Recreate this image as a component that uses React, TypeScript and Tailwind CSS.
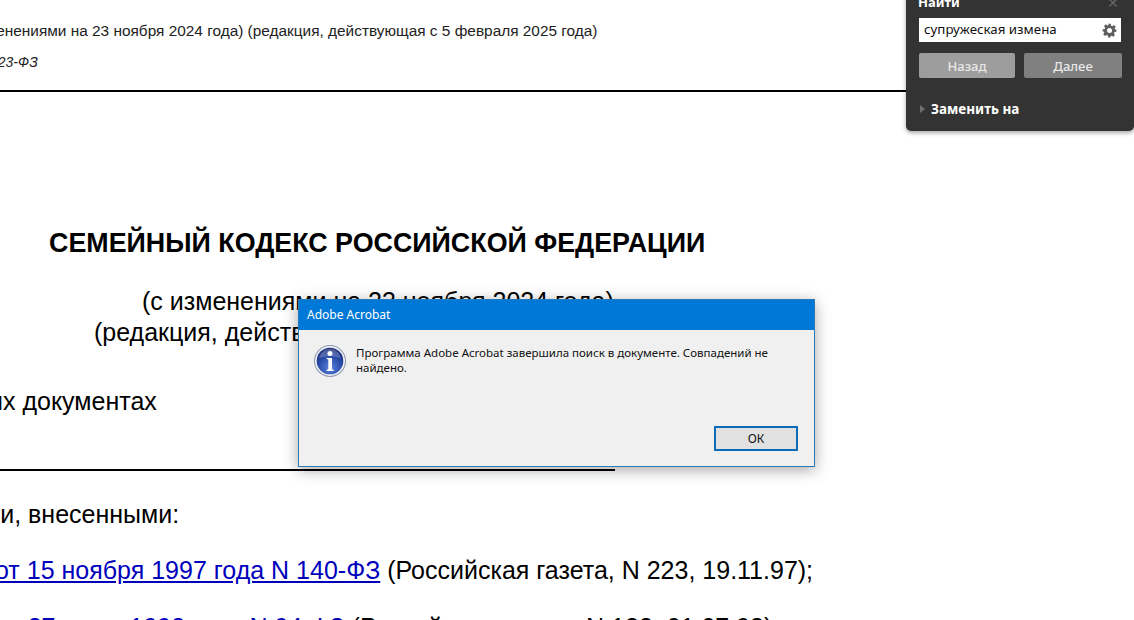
import React from "react";

function InfoIcon() {
  return (
    <svg width="34" height="34" viewBox="0 0 34 34" className="shrink-0">
      <defs>
        <radialGradient id="infoFill" cx="50%" cy="75%" r="75%">
          <stop offset="0%" stopColor="#5f86e0" />
          <stop offset="55%" stopColor="#2a4cab" />
          <stop offset="100%" stopColor="#17286f" />
        </radialGradient>
      </defs>
      <circle cx="17" cy="17" r="16" fill="#8d97ac" />
      <circle cx="17" cy="17" r="15" fill="#eef0f5" />
      <circle cx="17" cy="17" r="13.3" fill="url(#infoFill)" />
      <path d="M6 14.5C7.5 8 12 4.8 17 4.8S26.5 8 28 14.5C22 11.5 12 11.5 6 14.5Z" fill="#ffffff" opacity="0.22" />
      <circle cx="17" cy="9.6" r="2.5" fill="#ffffff" />
      <path d="M13.6 14h5.4v11.2l1.6.6V27h-7v-1.2l1.7-.6v-9.6l-1.7-.6Z" fill="#ffffff" />
    </svg>
  );
}

function FindPanel() {
  return (
    <div className="absolute left-[906px] top-[-12px] h-[143px] w-[228px] rounded-b-[5px] bg-[#333333] font-['Noto_Sans',sans-serif] shadow-[0_2px_4px_rgba(0,0,0,0.35)]">
      <div className="flex h-[25px] items-center justify-between pl-[12px] pr-[15px] pt-[4px]">
        <span className="text-[13px] font-bold text-white">Найти</span>
        <span className="text-[14px] leading-none text-[#666666]">✕</span>
      </div>
      <div className="mx-[13px] mt-[5px] flex h-[24px] w-[202px] items-center justify-between bg-white pl-[5px] pr-[4px]">
        <span className="text-[13.3px] leading-none text-[#111111]">супружеская измена</span>
        <svg width="15" height="15" viewBox="0 0 24 24" fill="#5f5f5f">
          <path fillRule="evenodd" d="M10 1h4l.6 3.2 1.9.8 2.7-1.8 2.8 2.8-1.8 2.7.8 1.9L23 10v4l-3.2.6-.8 1.9 1.8 2.7-2.8 2.8-2.7-1.8-1.9.8L13.9 23h-4l-.6-3.2-1.9-.8-2.7 1.8-2.8-2.8 1.8-2.7-.8-1.9L1 14v-4l3.2-.6.8-1.9-1.8-2.7 2.8-2.8 2.7 1.8 1.9-.8ZM12 8a4 4 0 1 0 0 8 4 4 0 0 0 0-8Z" />
        </svg>
      </div>
      <div className="ml-[13px] mt-[11px] flex gap-[9px]">
        <div className="flex h-[25px] w-[96px] items-center justify-center rounded-[2px] bg-[#9d9d9d] pt-[2px] text-[13px] font-medium text-[#e8e8e8]">Назад</div>
        <div className="flex h-[25px] w-[98px] items-center justify-center rounded-[2px] bg-[#808080] pt-[2px] text-[13px] font-medium text-[#e8e8e8]">Далее</div>
      </div>
      <div className="ml-[14px] mt-[22px] flex items-center gap-[6px]">
        <span className="h-0 w-0 border-y-[4px] border-l-[5px] border-y-transparent border-l-[#6e6e6e]" />
        <span className="text-[13.5px] leading-[18px] font-bold text-white">Заменить на</span>
      </div>
    </div>
  );
}

function AlertDialog() {
  return (
    <div className="absolute left-[298px] top-[299px] flex h-[168px] w-[517px] flex-col border border-[#2a7ab8] bg-[#f0f0f0] font-['Noto_Sans',sans-serif] shadow-[0_3px_14px_rgba(0,0,0,0.35)]">
      <div className="flex h-[30px] shrink-0 items-center bg-[#0078d7] pl-[8px] text-[12px] text-white">Adobe Acrobat</div>
      <div className="flex flex-1 items-start gap-[9px] pl-[14px] pr-[40px] pt-[14px]">
        <InfoIcon />
        <p className="mt-[1px] text-[11.5px] leading-[15px] text-[#111111]">
          Программа Adobe Acrobat завершила поиск в документе. Совпадений не найдено.
        </p>
      </div>
      <div className="flex justify-end pb-[15px] pr-[16px]">
        <div className="flex h-[25px] w-[84px] items-center justify-center border-2 border-[#0a6cb8] bg-[#e1e1e1] text-[12px] text-[#111111]">ОК</div>
      </div>
    </div>
  );
}

export default function App() {
  return (
    <div className="relative h-[620px] w-[1134px] overflow-hidden bg-white font-['Liberation_Sans',Arial,sans-serif] text-black">
      <div className="flex flex-col whitespace-nowrap">
        <div className="ml-[-42px] mt-[21px] text-[15.4px] leading-[20px] text-[#222222]">
          с изменениями на 23 ноября 2024 года) (редакция, действующая с 5 февраля 2025 года)
        </div>
        <div className="ml-[-24px] mt-[11px] text-[14px] italic leading-[20px] text-[#222222]">N 223-ФЗ</div>
        <div className="mt-[18px] h-[2px] w-[920px] bg-black" />
        <div className="mt-[135px] pl-[49px] text-[26.85px] font-bold leading-[32px]">СЕМЕЙНЫЙ КОДЕКС РОССИЙСКОЙ ФЕДЕРАЦИИ</div>
        <div className="mt-[28px] pl-[142px] text-[25px] leading-[28px]">(с изменениями на 23 ноября 2024 года)</div>
        <div className="mt-[3px] pl-[94px] text-[25px] leading-[28px]">(редакция, действующая с 5 февраля 2025 года)</div>
        <div className="ml-[-15px] mt-[41px] text-[25px] leading-[28px]">ых документах</div>
        <div className="mt-[54px] h-[2px] w-[615px] bg-black" />
        <div className="ml-[-17px] mt-[29px] text-[25px] leading-[28px]">ми, внесенными:</div>
        <div className="ml-[-5px] mt-[28px] text-[25px] leading-[28px]">
          <span className="text-[#0000bb] underline">от 15 ноября 1997 года N 140-ФЗ</span> (Российская газета, N 223, 19.11.97);
        </div>
        <div className="ml-[-110px] mt-[29px] text-[25px] leading-[28px]">
          <span className="text-[#0000bb] underline">Законом от 27 июня 1998 года N 94-ФЗ</span> (Российская газета, N 122, 01.07.98);
        </div>
      </div>
      <FindPanel />
      <AlertDialog />
    </div>
  );
}
